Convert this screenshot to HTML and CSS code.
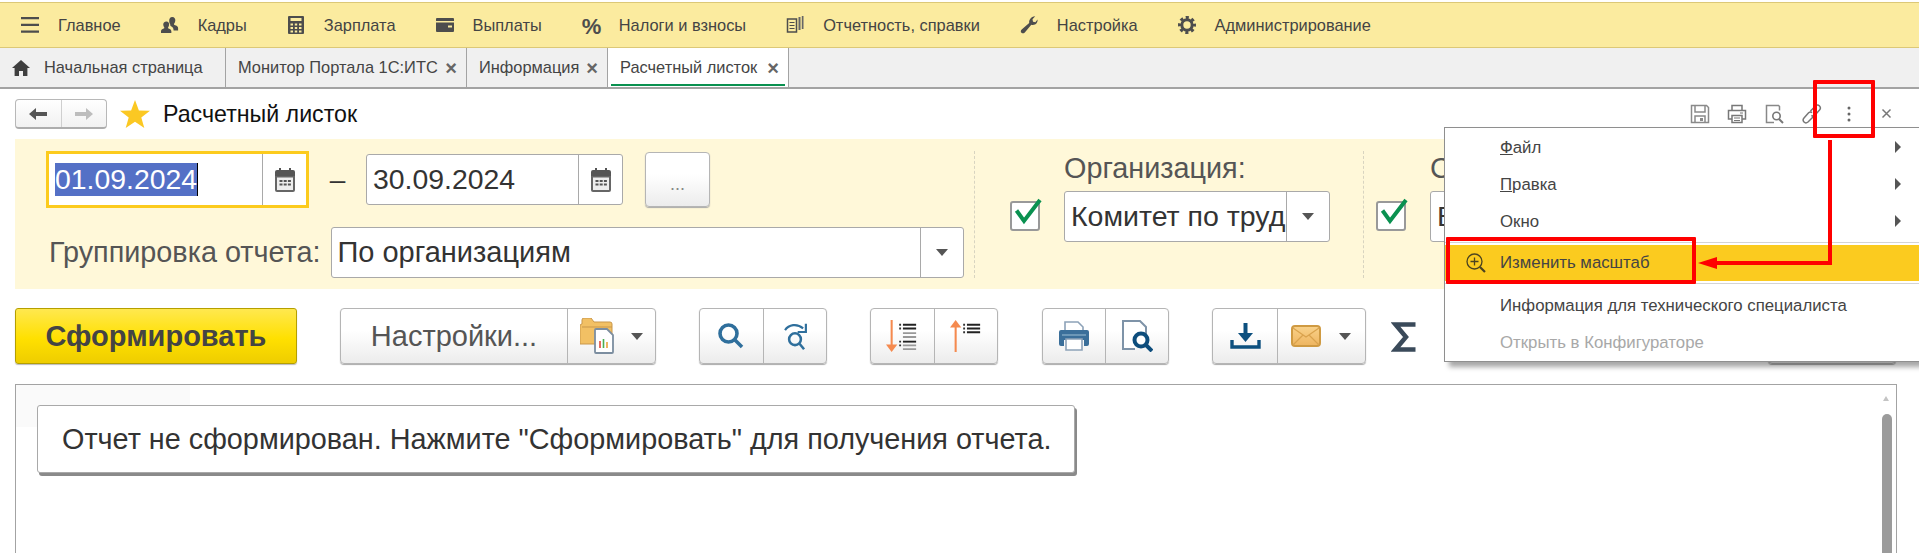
FILE: index.html
```html
<!DOCTYPE html>
<html lang="ru">
<head>
<meta charset="utf-8">
<title>Расчетный листок</title>
<link rel="stylesheet" href="styles.css">
</head>
<body>
<div class="page">
  <nav class="menubar">
    <a class="mitem"><svg class="micon" viewBox="0 0 18 18"><path d="M0 1h18v2.200H0zM0 7.700h18v2.200H0zM0 14.500h18v2.200H0z" fill="#4d4d4d"/></svg><span>Главное</span></a>
    <a class="mitem"><svg class="micon" viewBox="0 0 20 18"><path d="M12.500 0c2.500 0 3.700 2 3.400 4.400-.2 1.400-.7 2.400-1.400 3.100v1.300c1.500.6 4.500 1.400 4.500 3.700v2.500h-5c0-2.500-1-3.600-2.800-4.600-.9-.5-.9-.8-.9-1.900-.8-1-1.200-2.100-1.200-3.600C9 2 10 0 12.500 0zM6 5c2.200 0 3.200 1.700 3 3.700-.1 1.200-.5 2-1.100 2.700v1.200c1.400.5 3.600 1.200 3.600 3.400V18H0v-2c0-2.200 2.200-2.900 3.600-3.400v-1.200C3 10.700 2.600 9.900 2.500 8.700 2.300 6.700 3.800 5 6 5z" fill="#4d4d4d"/></svg><span>Кадры</span></a>
    <a class="mitem"><svg class="micon" viewBox="0 0 18 18"><path d="M2 0h14a1 1 0 0 1 1 1v16a1 1 0 0 1-1 1H2a1 1 0 0 1-1-1V1a1 1 0 0 1 1-1zM3.500 2v3h11V2zM3.500 7.500v2h2.500v-2zm4.300 0v2h2.400v-2zm4.200 0v2h2.500v-2zM3.500 11v2h2.500v-2zm4.300 0v2h2.400v-2zm4.200 0v2h2.500v-2zM3.500 14.500v2h2.500v-2zm4.300 0v2h2.400v-2zm4.200 0v2h2.500v-2z" fill="#4d4d4d" fill-rule="evenodd"/></svg><span>Зарплата</span></a>
    <a class="mitem"><svg class="micon" viewBox="0 0 18 18"><path d="M1 2h16a1 1 0 0 1 1 1v2H0V3a1 1 0 0 1 1-1z" fill="#4d4d4d"/><path d="M0 6.500h18V15a1 1 0 0 1-1 1H1a1 1 0 0 1-1-1zM12 9.500v2h4v-2z" fill="#4d4d4d" fill-rule="evenodd"/></svg><span>Выплаты</span></a>
    <a class="mitem"><span class="micon pct">%</span><span>Налоги и взносы</span></a>
    <a class="mitem"><svg class="micon" viewBox="0 0 18 18"><path d="M12.500 1h2V14h-2zM15.800 0h1.700v13h-1.700z" fill="#666"/><path d="M1.500 3h9v13h-9z" fill="none" stroke="#4d4d4d" stroke-width="1.500"/><path d="M3.500 6.500h5M3.500 9.500h5M3.500 12.500h5" stroke="#4d4d4d" stroke-width="1.200"/></svg><span>Отчетность, справки</span></a>
    <a class="mitem"><svg class="micon" viewBox="0 0 18 18"><path d="M17.500 3.500c.4 2.500-1.300 5.500-4.700 5.500-.6 0-1-.1-1.500-.2L4.800 16.400c-1 1.100-2.400 1.200-3.300.4-1-.9-.9-2.400.2-3.400L9.200 7c-.4-2.800 1.500-6.500 6-6.700L12.500 3.200l.5 2.500 2.400.6z" fill="#4d4d4d"/></svg><span>Настройка</span></a>
    <a class="mitem"><svg class="micon" viewBox="0 0 18 18"><circle cx="9" cy="9" r="5.200" fill="none" stroke="#4d4d4d" stroke-width="3"/><circle cx="9" cy="9" r="7.500" fill="none" stroke="#4d4d4d" stroke-width="3" stroke-dasharray="3.100 2.790" stroke-dashoffset="1.500"/></svg><span>Администрирование</span></a>
  </nav>

  <div class="tabs">
    <div class="tab tab-home"><svg class="home" viewBox="0 0 18 16"><path d="M9 0l9 8h-2.600v8h-4.400v-5H7v5H2.600V8H0z" fill="#3f3f3f"/></svg><span>Начальная страница</span></div>
    <div class="tab tab-mon"><span>Монитор Портала 1С:ИТС</span><i class="tclose">×</i></div>
    <div class="tab tab-inf"><span>Информация</span><i class="tclose">×</i></div>
    <div class="tab tab-active"><span>Расчетный листок</span><i class="tclose">×</i></div>
  </div>

  <header class="titlebar">
    <div class="navgroup">
      <span class="navbtn"><svg viewBox="0 0 18 12" class="navsvg"><path d="M0 6l7-6v4h11v4H7v4z" fill="#555"/></svg></span>
      <span class="navbtn"><svg viewBox="0 0 18 12" class="navsvg"><path d="M18 6l-7-6v4H0v4h11v4z" fill="#bdbdbd"/></svg></span>
    </div>
    <svg class="star" viewBox="0 0 30 28"><path d="M15 0l3.900 10.500 11.100.3-8.700 6.700L24.300 28 15 21.800 5.700 28l3-10.500L0 10.800l11.100-.3z" fill="#fbc823"/></svg>
    <h1 class="title">Расчетный листок</h1>
    <div class="wintools">
      <svg class="wt" viewBox="0 0 20 20"><path d="M1.500 1.500h15l2 2v15h-17z" fill="none" stroke="#8a8a8a" stroke-width="1.500"/><path d="M5 2v6h10V2M5 18v-6h10v6" fill="none" stroke="#8a8a8a" stroke-width="1.500"/><path d="M10 14h3v3h-3z" fill="#8a8a8a"/></svg>
      <svg class="wt" viewBox="0 0 20 20"><path d="M5 6V1.500h10V6M5 15H1.500V6.500h17V15H15" fill="none" stroke="#777" stroke-width="1.500"/><path d="M5 11.500h10v7H5z" fill="none" stroke="#777" stroke-width="1.500"/><path d="M7 14h6M7 16.500h6M13 9h3" stroke="#777" stroke-width="1.200"/></svg>
      <svg class="wt" viewBox="0 0 20 20"><path d="M9 18.500H1.500v-17h12l1 1v4" fill="none" stroke="#888" stroke-width="1.500"/><circle cx="11.500" cy="12" r="3.700" fill="none" stroke="#777" stroke-width="1.600"/><path d="M14 15l4 4" stroke="#777" stroke-width="2"/></svg>
      <svg class="wt" viewBox="0 0 20 20"><path d="M8.500 7l5-5c1.200-1 3-1 4 0s1 2.800 0 4l-4.600 5.200c-1.100 1-2.600 1-3.500.2M11 13l-5 5c-1.200 1-3 1-4 0s-1-2.800 0-4l4.600-5.200c1.100-1 2.600-1 3.500-.2" fill="none" stroke="#777" stroke-width="1.500"/></svg>
      <svg class="wt" viewBox="0 0 20 20"><circle cx="9" cy="4" r="1.500" fill="#666"/><circle cx="9" cy="10" r="1.500" fill="#666"/><circle cx="9" cy="16" r="1.500" fill="#666"/></svg>
      <svg class="wt" viewBox="0 0 20 20"><path d="M5.500 5.500l8 8M13.500 5.500l-8 8" stroke="#777" stroke-width="1.500"/></svg>
    </div>
  </header>

  <section class="filters">
    <div class="fcol-main">
      <div class="frow">
        <div class="field date focus">
          <span class="fval"><span class="sel">01.09.2024</span><i class="caret"></i></span>
          <span class="fbtn"><svg class="cal" viewBox="0 0 20 24"><path d="M0 4a2 2 0 0 1 2-2h16a2 2 0 0 1 2 2v4H0z" fill="#555"/><path d="M0 8h20v14a2 2 0 0 1-2 2H2a2 2 0 0 1-2-2z" fill="#666"/><path d="M2 9.500h16V22H2z" fill="#eee"/><path d="M4 0h2v5H4zM14 0h2v5h-2zM4.500 12h3v2h-3zM8.700 12h3v2h-3zM12.900 12h3v2h-3zM4.500 15.500h3v2h-3zM8.700 15.500h3v2h-3zM12.900 15.500h3v2h-3z" fill="#555"/></svg></span>
        </div>
        <span class="dash">–</span>
        <div class="field date">
          <span class="fval">30.09.2024</span>
          <span class="fbtn"><svg class="cal" viewBox="0 0 20 24"><path d="M0 4a2 2 0 0 1 2-2h16a2 2 0 0 1 2 2v4H0z" fill="#555"/><path d="M0 8h20v14a2 2 0 0 1-2 2H2a2 2 0 0 1-2-2z" fill="#666"/><path d="M2 9.500h16V22H2z" fill="#eee"/><path d="M4 0h2v5H4zM14 0h2v5h-2zM4.500 12h3v2h-3zM8.700 12h3v2h-3zM12.900 12h3v2h-3zM4.500 15.500h3v2h-3zM8.700 15.500h3v2h-3zM12.900 15.500h3v2h-3z" fill="#555"/></svg></span>
        </div>
        <button class="btn btn-dots">...</button>
      </div>
      <div class="frow frow2">
        <label class="flabel">Группировка отчета:</label>
        <div class="field group">
          <span class="fval">По организациям</span>
          <span class="fbtn drop"><i class="tri"></i></span>
        </div>
      </div>
    </div>
    <div class="fsep"></div>
    <div class="fcol">
      <span class="check"><svg viewBox="0 0 26 24" class="tick"><path d="M1.500 11.500L9 22 25 1" fill="none" stroke="#0a9150" stroke-width="4"/></svg></span>
      <div class="fstack">
        <label class="flabel">Организация:</label>
        <div class="field org">
          <span class="fval">Комитет по труд</span>
          <span class="fbtn drop"><i class="tri"></i></span>
        </div>
      </div>
    </div>
    <div class="fsep fsep2"></div>
    <div class="fcol fcol-last">
      <span class="check"><svg viewBox="0 0 26 24" class="tick"><path d="M1.500 11.500L9 22 25 1" fill="none" stroke="#0a9150" stroke-width="4"/></svg></span>
      <div class="fstack fstack-last">
        <label class="flabel">С</label>
        <div class="field org">
          <span class="fval">В</span>
        </div>
      </div>
    </div>
  </section>

  <section class="actions">
    <button class="btn btn-primary">Сформировать</button>
    <div class="bgroup g-settings">
      <span class="bseg seg-text">Настройки...</span>
      <span class="bseg seg-folder">
        <svg class="ic32" viewBox="0 0 34 36"><path d="M0 8a2 2 0 0 1 2-2V2a2 2 0 0 1 2-2h7l3 4h16a2 2 0 0 1 2 2v20H0z" fill="#f2c064" stroke="#c9974a"/><path d="M2 9h30" stroke="#c9974a"/><path d="M16 11h11l6 6v17a1 1 0 0 1-1 1H16a1 1 0 0 1-1-1V12a1 1 0 0 1 1-1z" fill="#fff" stroke="#7c8ea0" stroke-width="1.800"/><path d="M20 23v7" stroke="#e0483a" stroke-width="1.600"/><path d="M23.500 21v9" stroke="#4caf50" stroke-width="1.600"/><path d="M27 24v6" stroke="#e9a23a" stroke-width="1.600"/></svg>
        <i class="tri"></i>
      </span>
    </div>
    <div class="bgroup g-pair">
      <span class="bseg"><svg class="ic26" viewBox="0 0 26 26"><circle cx="10.500" cy="10.500" r="8.500" fill="none" stroke="#2f6f9c" stroke-width="3.600"/><path d="M17 17l7 7" stroke="#2f6f9c" stroke-width="3.600"/></svg></span>
      <span class="bseg"><svg class="ic26 ic26t" viewBox="0 0 26 32"><path d="M2 9C6 3 15 1 22 7" fill="none" stroke="#2f6f9c" stroke-width="2.400"/><path d="M25 2v9h-9" fill="none" stroke="#2f6f9c" stroke-width="2.400" /><circle cx="13" cy="19" r="6.500" fill="none" stroke="#2f6f9c" stroke-width="2.800"/><path d="M18 24l5 6" stroke="#2f6f9c" stroke-width="2.800"/></svg></span>
    </div>
    <div class="bgroup g-pair">
      <span class="bseg"><svg class="ic32b" viewBox="0 0 34 34"><path d="M6 0v28" stroke="#f58a4f" stroke-width="2.200"/><path d="M0 26h12l-6 8z" fill="#f58a4f"/><path d="M14 4h2v2h-2zM14 8h2v2h-2zM14 22h2v2h-2zM14 26h2v2h-2z" fill="#333"/><path d="M18 5h14M18 9h14" stroke="#222" stroke-width="2"/><path d="M18 14h14M18 18h14" stroke="#999" stroke-width="2"/><path d="M18 23h14" stroke="#222" stroke-width="2"/><path d="M18 27h14M18 31h14" stroke="#999" stroke-width="2"/></svg></span>
      <span class="bseg"><svg class="ic32b" viewBox="0 0 34 34"><path d="M6 34V6" stroke="#f58a4f" stroke-width="2.200"/><path d="M0 8h12L6 0z" fill="#f58a4f"/><path d="M14 4h2v2h-2zM14 8h2v2h-2zM14 12h2v2h-2z" fill="#333"/><path d="M18 5h14M18 9h14M18 13h14" stroke="#222" stroke-width="2"/></svg></span>
    </div>
    <div class="bgroup g-pair g-print">
      <span class="bseg"><svg class="ic30p" viewBox="0 0 30 30"><path d="M6 10V1h13l5 5v4" fill="#fff" stroke="#8da2b8" stroke-width="1.600"/><path d="M2 9h26a2 2 0 0 1 2 2v12a2 2 0 0 1-2 2h-3v-6H5v6H2a2 2 0 0 1-2-2V11a2 2 0 0 1 2-2z" fill="#3b6f9a"/><path d="M3 14h24" stroke="#8fb2cc" stroke-width="1.200"/><path d="M7 18h16v11H7z" fill="#fff" stroke="#8da2b8" stroke-width="1.600"/></svg></span>
      <span class="bseg"><svg class="ic32b" viewBox="0 0 32 32"><path d="M14 29H2V1h17l6 6v7" fill="#fff" stroke="#7e93a8" stroke-width="2"/><circle cx="20" cy="20" r="6.500" fill="#fff" stroke="#0d4d7c" stroke-width="4"/><path d="M25 25l6 6" stroke="#0d4d7c" stroke-width="4"/></svg></span>
    </div>
    <div class="bgroup g-mail">
      <span class="bseg seg-dl"><svg class="icdl" viewBox="0 0 31 26"><path d="M15.500 0v12" stroke="#0d507f" stroke-width="4"/><path d="M8 10h15l-7.500 9z" fill="#0d507f"/><path d="M2 17v7h27v-7" fill="none" stroke="#0d507f" stroke-width="3.400"/></svg></span>
      <span class="bseg seg-mail"><svg class="icmail" viewBox="0 0 30 22"><defs><linearGradient id="mailfill" x1="0" y1="0" x2="0" y2="1"><stop offset="0" stop-color="#f9d28b"/><stop offset="1" stop-color="#eeb45f"/></linearGradient></defs><rect x="1" y="1" width="28" height="20" rx="3" fill="url(#mailfill)" stroke="#cf9a42" stroke-width="2"/><path d="M2 3l13 9L28 3M2 20l10-10M28 20L18 10" fill="none" stroke="#d9a24d" stroke-width="1.200"/></svg><i class="tri"></i></span>
    </div>
    <svg class="sigma" viewBox="0 0 25 30"><path d="M24.500 2.500H4.500l10.500 12.500L4.500 27.500h20" fill="none" stroke="#3a4a5a" stroke-width="4.500"/></svg>
    <button class="btn btn-hidden" aria-label="Скрыть"></button>
  </section>

  <main class="report">
    <div class="rcorner"></div>
    <div class="message">Отчет не сформирован. Нажмите "Сформировать" для получения отчета.</div>
    <i class="sb-up"></i>
    <div class="sb-thumb"></div>
  </main>

  <div class="popup">
    <div class="pitem"><span class="plabel"><u>Ф</u>айл</span><i class="parrow"></i></div>
    <div class="pitem"><span class="plabel"><u>П</u>равка</span><i class="parrow"></i></div>
    <div class="pitem"><span class="plabel">Окно</span><i class="parrow"></i></div>
    <div class="psep"></div>
    <div class="pitem pactive"><svg class="zoomic" viewBox="0 0 20 20"><circle cx="8.500" cy="8.500" r="7.500" fill="none" stroke="#4b4320" stroke-width="1.300"/><path d="M8.500 4.500v8M4.500 8.500h8" stroke="#4b4320" stroke-width="1.300"/><path d="M14 14l5 5" stroke="#4b4320" stroke-width="2.200"/></svg><span class="plabel">Изменить масштаб</span></div>
    <div class="psep"></div>
    <div class="pitem"><span class="plabel">Информация для технического специалиста</span></div>
    <div class="pitem pdis"><span class="plabel">Открыть в Конфигураторе</span></div>
  </div>

  <div class="mark mark-dots"></div>
  <div class="mark mark-zoom"></div>
  <svg class="arrow" viewBox="0 0 140 130"><path d="M132 0v123H18" fill="none" stroke="#ff0000" stroke-width="4"/><path d="M0 123l19-6v12z" fill="#ff0000"/></svg>
</div>
</body>
</html>
```
FILE: styles.css
```css
* { box-sizing: border-box; }
html, body { margin: 0; padding: 0; }
body { background: #fff; color: #333; font-family: "Liberation Sans", Arial, sans-serif; }
.page { position: relative; width: 1919px; height: 553px; overflow: hidden; }
i { font-style: normal; }
button { font-family: inherit; }

.menubar { display: flex; align-items: center; gap: 40px; height: 46px; margin-top: 2px; padding-left: 21px; background: #fbeb9f; border-top: 1px solid #dcc877; border-bottom: 1px solid #dcc877; font-size: 16.400px; color: #444; }
.mitem { display: flex; align-items: center; gap: 19px; }
.micon { width: 18px; height: 18px; flex: none; display: block; }
.pct { font-size: 22px; font-weight: bold; line-height: 18px; color: #4d4d4d; margin-top: 4px; }

.tabs { display: flex; height: 41px; background: #f0f0f0; border-bottom: 2px solid #a3a3a3; font-size: 16.400px; color: #444; }
.tab { display: flex; align-items: center; justify-content: space-between; padding: 0 9px 0 12px; border-right: 1px solid #a3a3a3; white-space: nowrap; }
.tab-home { justify-content: flex-start; gap: 14px; width: 226px; }
.tab-mon { width: 241px; }
.tab-inf { width: 141px; }
.tab-active { width: 181px; }
.home { width: 18px; height: 16px; }
.tclose { font-size: 20px; line-height: 20px; color: #666; font-weight: bold; }
.tab-active { position: relative; background: #fff; }
.tab-active::after { content: ""; position: absolute; left: 3px; right: 3px; bottom: 1px; height: 2px; background: #0a9150; }

.titlebar { display: flex; align-items: center; height: 50px; padding: 0 22px 0 15px; }
.navgroup { display: flex; width: 92px; height: 30px; border: 1px solid #b8b8b8; border-bottom: 2px solid #adadad; border-radius: 4px; background: linear-gradient(#fff, #f1f1f1); }
.navbtn { flex: 1; display: flex; align-items: center; justify-content: center; }
.navbtn + .navbtn { border-left: 1px solid #cfcfcf; }
.navsvg { width: 18px; height: 12px; }
.star { width: 30px; height: 28px; margin-left: 13px; }
.title { margin: 0 0 0 13px; font-size: 23.200px; font-weight: normal; color: #111; }
.wintools { display: flex; gap: 17.500px; margin-left: auto; }
.wt { width: 20px; height: 20px; }

.filters { display: flex; height: 150px; margin: 0 0 0 15px; padding: 12px 0 0 31px; background: #fff8d9; }
.fcol-main { width: 917px; }
.frow { display: flex; align-items: center; height: 57px; }
.frow2 { margin-top: 19px; height: 51px; }
.field { display: flex; height: 51px; background: #fff; border: 1px solid #a9a9a9; border-radius: 3px; font-size: 28.400px; color: #333; overflow: hidden; }
.fval { flex: 1; display: flex; align-items: center; padding-left: 6px; white-space: nowrap; overflow: hidden; min-width: 0; }
.fbtn { flex: none; display: flex; align-items: center; justify-content: center; border-left: 1px solid #a9a9a9; }
.date { width: 257px; }
.date .fbtn { width: 44px; }
.focus { width: 263px; height: 57px; border: 3px solid #fccb1d; border-radius: 0; box-shadow: inset 0 0 0 1px #fff; }
.sel { display: inline-block; height: 33px; line-height: 33px; background: #5470c6; color: #fff; }
.caret { display: inline-block; width: 1px; height: 33px; background: #000; }
.cal { width: 20px; height: 24px; }
.dash { width: 57px; text-align: center; font-size: 28px; color: #333; }
.btn { border: 1px solid #b5b5b5; border-radius: 4px; background: linear-gradient(#fff 40%, #ececec); box-shadow: 0 1px 1px #aaa; color: #555; }
.btn-dots { width: 65px; height: 55px; margin-left: 22px; padding-top: 10px; font-size: 18px; color: #888; }
.flabel { font-size: 28.800px; color: #555; white-space: nowrap; }
.frow2 .flabel { margin-left: 3px; }
.group { flex: none; width: 633px; margin-left: 11px; font-size: 29px; }
.group .fval { padding-left: 5px; }
.drop { width: 43px; }
.tri { display: block; flex: none; width: 0; height: 0; border-left: 6px solid transparent; border-right: 6px solid transparent; border-top: 7px solid #555; }
.fsep { width: 1px; height: 127px; margin-left: 11px; border-left: 1px dashed #d8d4c0; }
.fsep2 { margin-left: 33px; }
.fcol { display: flex; margin-left: 35px; }
.fcol-last { margin-left: 12px; }
.check { flex: none; position: relative; width: 30px; height: 30px; margin: 50px 24px 0 0; background: #fff; border: 2px solid #999; border-radius: 3px; }
.tick { position: absolute; left: 3px; top: -4px; width: 26px; height: 24px; overflow: visible; }
.fstack { width: 266px; }
.fstack .flabel { display: block; height: 40px; line-height: 34px; }
.org { width: 266px; font-size: 28.500px; }
.org .fval { padding-right: 5px; }

.actions { display: flex; align-items: flex-start; gap: 43px; height: 56px; margin: 19px 0 0 15px; }
.btn-primary { width: 282px; height: 56px; border: 1px solid #b59f00; border-radius: 3px; background: linear-gradient(#ffe84f, #ffe000 55%, #eecd00); font-size: 29px; font-weight: bold; color: #444; box-shadow: 0 1px 1px #bbb; }
.bgroup { display: flex; height: 56px; border: 1px solid #b5b5b5; border-radius: 4px; background: linear-gradient(#fff 40%, #ececec); box-shadow: 0 1px 1px #aaa; }
.bseg { display: flex; align-items: center; justify-content: center; }
.bseg + .bseg { border-left: 1px solid #b5b5b5; }
.g-settings { width: 316px; }
.seg-text { width: 226px; font-size: 29px; color: #555; }
.seg-folder { flex: 1; justify-content: flex-start; padding-left: 12px; gap: 17px; }
.g-pair { width: 128px; }
.g-pair .bseg { flex: 1; }
.g-print { width: 127px; margin-left: 1px; }
.ic32 { width: 34px; height: 36px; }
.ic26 { width: 26px; height: 26px; }
.ic26t { height: 29px; }
.ic32b { width: 32px; height: 32px; }
.ic30p { width: 30px; height: 30px; }
.icdl { width: 31px; height: 26px; }
.icmail { width: 30px; height: 22px; }
.g-mail { width: 154px; }
.seg-dl { width: 64px; }
.seg-mail { flex: 1; justify-content: flex-start; padding-left: 13px; gap: 18px; }
.sigma { width: 25px; height: 30px; margin: 14px 0 0 -18px; }
.btn-hidden { width: 128px; height: 56px; margin-left: 309px; font-size: 20px; }

.report { position: relative; height: 170px; margin: 20px 22px 0 15px; border: 1px solid #a3a3a3; border-bottom: 0; padding: 20px 0 0 21px; }
.rcorner { position: absolute; left: 0; top: 0; width: 174px; height: 42px; background: #fafafa; }
.message { position: relative; display: inline-block; height: 68px; padding: 0 23px 0 24px; line-height: 66px; font-size: 28.800px; color: #333; background: #fff; border: 1px solid #a9a9a9; border-radius: 3px; box-shadow: 2px 3px 0 #8a8a8a; }
.sb-up { position: absolute; right: 7px; top: 11px; border-left: 3px solid transparent; border-right: 3px solid transparent; border-bottom: 5px solid #c4c4c4; }
.sb-thumb { position: absolute; right: 4px; top: 29px; width: 10px; bottom: 0; background: #9b9b9b; border-radius: 5px 5px 0 0; }

.popup { position: absolute; left: 1444px; top: 127px; width: 475px; height: 235px; padding-top: 1px; background: #fff; border: 1px solid #8f8f8f; border-right: 0; box-shadow: 5px 5px 5px rgba(0,0,0,.35); font-size: 16.800px; color: #444; }
.pitem { position: relative; display: flex; align-items: center; height: 37px; padding-left: 55px; }
.psep { height: 1px; margin-top: 2px; background: #d4d4d4; }
.pactive { height: 36px; margin: 2px 0; background: #fbcb1f; }
.pactive + .psep { margin-top: 0; margin-bottom: 3px; }
.zoomic { position: absolute; left: 21px; top: 8px; width: 20px; height: 20px; }
.pdis { color: #a8a8a8; }
.parrow { position: absolute; right: 18px; top: 12px; border-top: 6px solid transparent; border-bottom: 6px solid transparent; border-left: 6px solid #555; }

.mark { position: absolute; border: 4px solid #ff0000; border-radius: 1px; }
.mark-dots { left: 1813px; top: 80px; width: 62px; height: 58px; }
.mark-zoom { left: 1446px; top: 237px; width: 250px; height: 47px; }
.arrow { position: absolute; left: 1698px; top: 140px; width: 140px; height: 130px; }
```
